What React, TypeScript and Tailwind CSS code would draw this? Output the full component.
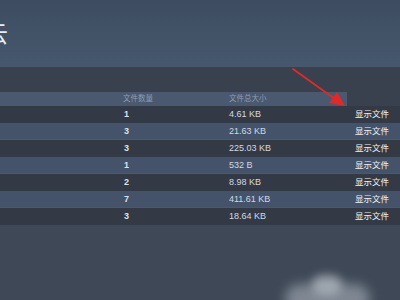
import React from "react";

const rows = [
  ["1", "4.61 KB"],
  ["3", "21.63 KB"],
  ["3", "225.03 KB"],
  ["1", "532 B"],
  ["2", "8.98 KB"],
  ["7", "411.61 KB"],
  ["3", "18.64 KB"],
];

export default function App() {
  return (
    <div
      className="relative w-[400px] h-[300px] overflow-hidden bg-[#3e4856]"
      style={{ fontFamily: '"Liberation Sans", "Noto Sans CJK SC", sans-serif' }}
    >
      <div className="h-[67px] bg-gradient-to-b from-[#3d4c60] to-[#46586e] pt-[19px]">
        <div className="ml-[-15px] text-[23px] leading-[30px] text-[#e8edf3]">云</div>
      </div>
      <div className="h-[25px] bg-[#39414f]" />
      <div className="grid grid-cols-[123px_106px_126px_1fr] h-[14px] bg-[#39414f] text-[7.5px] text-[#8d9db2] leading-[14px]">
        <div className="bg-[#4a596f]" />
        <div className="bg-[#4a596f]">文件数量</div>
        <div className="bg-[#4a596f] mr-[8px]">文件总大小</div>
        <div />
      </div>
      {rows.map((r, i) => (
        <div
          key={i}
          className={
            "grid grid-cols-[123px_106px_126px_1fr] h-[17px] leading-[17px] text-[9px] " +
            (i % 2 === 0 ? "bg-[#333a45]" : "bg-[#44526a] border-b border-[#4b5970]")
          }
        >
          <div />
          <div className="pl-[1px] text-[#dde2ea] font-semibold">{r[0]}</div>
          <div className="text-[#d3d9e2]">{r[1]}</div>
          <div className="text-[8.5px] text-[#f2f4f7]">显示文件</div>
        </div>
      ))}
      <svg className="absolute left-0 top-0" width="400" height="300">
        <line x1="293" y1="69" x2="335" y2="99" stroke="#e02a2a" strokeWidth="1.8" strokeLinecap="round" />
        <polygon points="345,106 329,103 337,92" fill="#e02a2a" />
      </svg>
      <div className="absolute left-[285px] top-[284px] w-[85px] h-[30px] rounded-full bg-[#a9b1bb] blur-[6px] opacity-60" />
      <div className="absolute left-[312px] top-[275px] w-[30px] h-[20px] rounded-full bg-[#b6bdc5] blur-[5px] opacity-70" />
    </div>
  );
}
